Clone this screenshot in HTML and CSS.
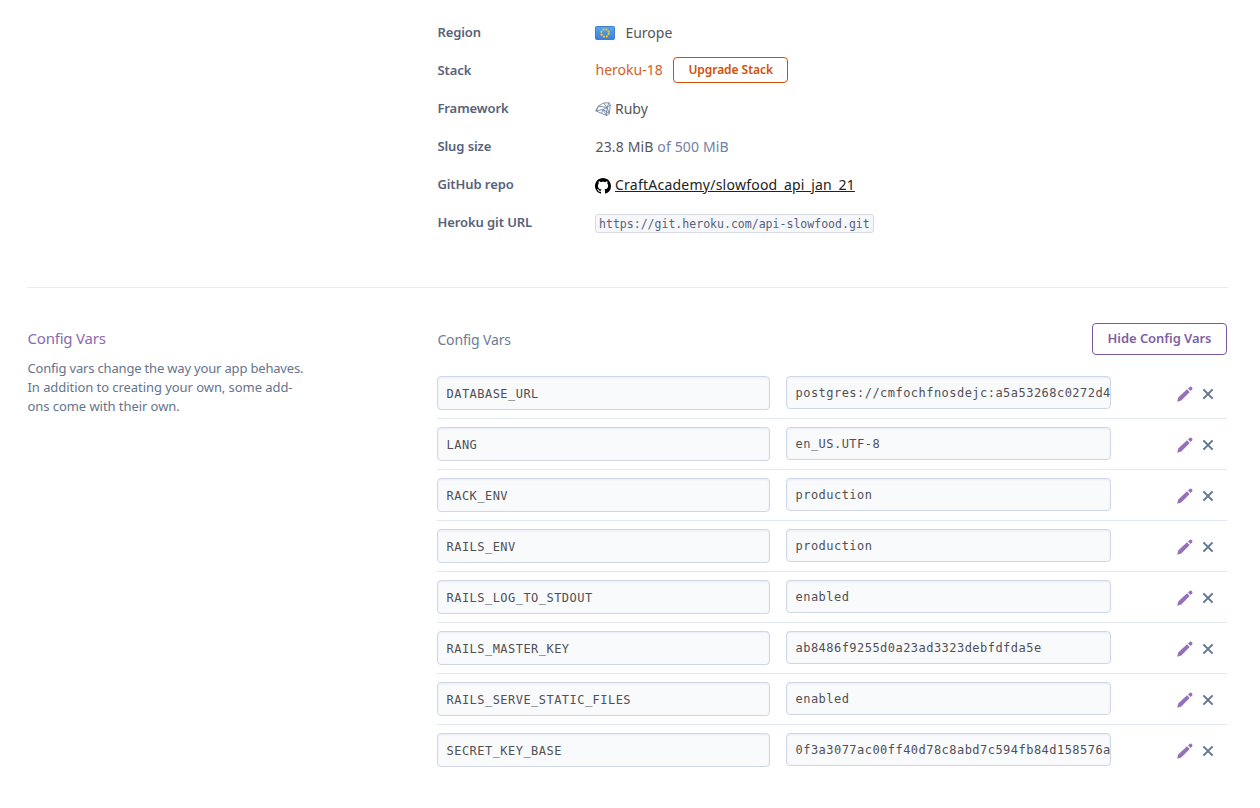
FILE: index.html
```
<!DOCTYPE html>
<html lang="en">
<head>
<meta charset="utf-8">
<title>App settings</title>
<link rel="stylesheet" href="styles.css">
</head>
<body>
<svg class="defs" width="0" height="0" aria-hidden="true">
  <symbol id="pencil" viewBox="0 0 16 16"><path d="M.2 15.800 1.200 11.600 10 3.300 12.700 6 4.300 14.600ZM11 2.400 12.600 .9Q13.600 0 14.600 .9L15.100 1.400Q16 2.400 15.100 3.400L13.600 5Z"/></symbol>
  <symbol id="cross" viewBox="0 0 12 12"><path d="M1.400 1.400 10.600 10.600M10.600 1.400 1.400 10.600"/></symbol>
</svg>
<main class="page">
  <section class="info">
    <dl class="details">
      <div class="detail"><dt>Region</dt><dd>
        <svg class="flag" viewBox="0 0 20 14"><defs><linearGradient id="sky" x1="0" y1="0" x2="0" y2="1"><stop offset="0" stop-color="#5aa5ee"/><stop offset="1" stop-color="#3c7fdc"/></linearGradient></defs><rect x=".5" y=".5" width="19" height="13" rx="1" fill="url(#sky)" stroke="#3f7fcc"/><circle cx="10" cy="7" r="3.800" fill="none" stroke="#f0cc22" stroke-width="1.900" stroke-dasharray="1.900 1.084"/></svg>
        <span>Europe</span></dd></div>
      <div class="detail"><dt>Stack</dt><dd class="stack-cell"><span class="stack">heroku-18</span><button class="upgrade">Upgrade Stack</button></dd></div>
      <div class="detail"><dt>Framework</dt><dd>
        <svg class="ruby" viewBox="0 0 16 16"><path d="M.7 9.800 3.500 5 8.500 2 14 1.800 15.300 4 14.300 12.500 11.500 14.500ZM.7 9.800 8 8.500 11.500 14.500 12 6.500 15.300 4M3.500 5 12 6.500 8 8.500M8.500 2 12 6.500 14 1.800M3.500 5 1.500 9.500M12 6.500 14.300 12.500 8 8.500 6.500 12"/></svg>
        <span>Ruby</span></dd></div>
      <div class="detail"><dt>Slug size</dt><dd><span class="slug">23.8 MiB <span class="muted">of 500 MiB</span></span></dd></div>
      <div class="detail"><dt>GitHub repo</dt><dd>
        <svg class="github" viewBox="0 0 16 16"><path d="M8 0C3.580 0 0 3.580 0 8c0 3.540 2.290 6.530 5.470 7.590.4.070.55-.17.55-.38 0-.19-.01-.82-.01-1.490-2.010.37-2.530-.49-2.690-.94-.09-.23-.48-.94-.82-1.130-.28-.15-.68-.52-.01-.53.63-.01 1.080.58 1.230.82.72 1.210 1.870.87 2.330.66.07-.52.28-.87.51-1.070-1.780-.2-3.640-.89-3.640-3.950 0-.87.31-1.590.82-2.150-.08-.2-.36-1.020.08-2.120 0 0 .67-.21 2.200.82.64-.18 1.320-.27 2-.27s1.360.09 2 .27c1.530-1.040 2.200-.82 2.200-.82.44 1.100.16 1.920.08 2.120.51.56.82 1.270.82 2.150 0 3.070-1.870 3.750-3.650 3.950.29.25.54.73.54 1.480 0 1.070-.01 1.930-.01 2.200 0 .21.15.46.55.38A8.010 8.010 0 0 0 16 8c0-4.420-3.580-8-8-8z"/></svg>
        <a class="repo">CraftAcademy/slowfood_api_jan_21</a></dd></div>
      <div class="detail"><dt>Heroku git URL</dt><dd><code class="giturl">https://git.heroku.com/api-slowfood.git</code></dd></div>
    </dl>
  </section>
  <section class="config">
    <aside class="about">
      <h2>Config Vars</h2>
      <p><span class="tight">Config vars change the way your app behaves.</span><br>In addition to creating your own, some add-<br>ons come with their own.</p>
    </aside>
    <div class="vars">
      <header class="vars-head"><h3>Config Vars</h3><button class="hide">Hide Config Vars</button></header>
      <ul class="list">
        <li class="row"><div class="key">DATABASE_URL</div><div class="value">postgres://cmfochfnosdejc:a5a53268c0272d4</div><div class="actions"><svg class="edit"><use href="#pencil"/></svg><svg class="remove"><use href="#cross"/></svg></div></li>
        <li class="row"><div class="key">LANG</div><div class="value">en_US.UTF-8</div><div class="actions"><svg class="edit"><use href="#pencil"/></svg><svg class="remove"><use href="#cross"/></svg></div></li>
        <li class="row"><div class="key">RACK_ENV</div><div class="value">production</div><div class="actions"><svg class="edit"><use href="#pencil"/></svg><svg class="remove"><use href="#cross"/></svg></div></li>
        <li class="row"><div class="key">RAILS_ENV</div><div class="value">production</div><div class="actions"><svg class="edit"><use href="#pencil"/></svg><svg class="remove"><use href="#cross"/></svg></div></li>
        <li class="row"><div class="key">RAILS_LOG_TO_STDOUT</div><div class="value">enabled</div><div class="actions"><svg class="edit"><use href="#pencil"/></svg><svg class="remove"><use href="#cross"/></svg></div></li>
        <li class="row"><div class="key">RAILS_MASTER_KEY</div><div class="value">ab8486f9255d0a23ad3323debfdfda5e</div><div class="actions"><svg class="edit"><use href="#pencil"/></svg><svg class="remove"><use href="#cross"/></svg></div></li>
        <li class="row"><div class="key">RAILS_SERVE_STATIC_FILES</div><div class="value">enabled</div><div class="actions"><svg class="edit"><use href="#pencil"/></svg><svg class="remove"><use href="#cross"/></svg></div></li>
        <li class="row"><div class="key">SECRET_KEY_BASE</div><div class="value">0f3a3077ac00ff40d78c8abd7c594fb84d158576a</div><div class="actions"><svg class="edit"><use href="#pencil"/></svg><svg class="remove"><use href="#cross"/></svg></div></li>
      </ul>
    </div>
  </section>
</main>
</body>
</html>
```

FILE: styles.css
```
* { box-sizing: border-box; }
body { margin: 0; background: #fff; color: #55555a; font-family: "Noto Sans", "Open Sans", sans-serif; overflow: hidden; }
.defs { display: block; height: 0; }
h2, h3, p, dl, dd, ul { margin: 0; padding: 0; }
.page { padding: 14px 32px 0 27px; height: 808px; }
.info { height: 274px; padding-left: 410px; border-bottom: 1px solid #ebebeb; }
.detail { display: flex; align-items: center; height: 38px; }
dt { width: 158px; font-size: 13px; font-weight: 600; color: #56627a; line-height: 18px; padding: 0 0 2px .4px; letter-spacing: -.08px; }
dd { display: flex; align-items: center; font-size: 14px; line-height: 20px; white-space: nowrap; }
.flag { width: 20px; height: 14px; margin-right: 10.400px; }
.stack-cell { padding-bottom: 2px; }
.stack { color: #d4601f; padding-left: .5px; }
.upgrade { width: 115px; height: 26px; margin: 0 0 0 10.500px; padding: 0 0 2px; border: 1px solid #cf4f0b; border-radius: 4px; background: #fff; color: #cf4f0b; font: 600 12px "Noto Sans", sans-serif; letter-spacing: -.05px; white-space: nowrap; }
.ruby { width: 16px; height: 16px; margin-right: 4px; fill: none; stroke: #7485a5; stroke-width: .9; stroke-linejoin: round; }
.slug { letter-spacing: .15px; padding-left: .5px; }
.muted { color: #6f82a5; }
.github { width: 16px; height: 16px; margin-right: 4px; margin-top: 1px; }
.repo { color: #222; text-decoration: underline; letter-spacing: .24px; }
.giturl { height: 19px; padding: 0 3px; border: 1px solid #d9dbe3; border-radius: 3px; background: #f5f7fb; color: #56627a; font: 11.540px/18px "DejaVu Sans Mono", monospace; }
.config { display: flex; padding-top: 35px; }
.about { width: 410px; flex: none; padding: 4px 0 0 .5px; }
.about h2 { font-size: 15px; font-weight: 400; line-height: 23px; color: #8a69ae; letter-spacing: -.2px; }
.about p { margin-top: 9px; font-size: 13px; line-height: 19px; color: #66748b; letter-spacing: -.06px; white-space: nowrap; }
.tight { letter-spacing: -.18px; }
.vars { width: 790px; flex: none; }
.vars-head { display: flex; justify-content: space-between; height: 45px; }
.vars-head h3 { font-size: 14px; font-weight: 400; line-height: 20px; color: #6d7b93; padding: 7px 0 0 .4px; letter-spacing: -.15px; }
.hide { width: 135px; height: 32px; padding: 0 0 2px; border: 1px solid #79589f; border-radius: 4px; background: #fff; color: #805fa5; font: 600 13px "Noto Sans", sans-serif; letter-spacing: -.06px; white-space: nowrap; }
.list { list-style: none; }
.row { display: flex; height: 51px; padding-top: 8px; border-bottom: 1px solid #e3e7f1; }
.row:last-child { border-bottom: 0; }
.key, .value { border: 1px solid #cfd7e6; border-radius: 4px; background: #f9fafc; box-shadow: inset 0 1px 2px #e8ecf4; font-family: "DejaVu Sans Mono", monospace; font-size: 12px; letter-spacing: .465px; color: #505055; white-space: nowrap; overflow: hidden; }
.key { width: 333px; height: 34px; padding-left: 8.500px; line-height: 35px; }
.value { width: 325px; height: 33px; margin-left: 16px; padding-left: 8.500px; line-height: 33px; }
.actions { display: flex; align-items: center; height: 34px; margin-left: 66px; padding-top: 2px; gap: 9px; }
.edit { width: 16px; height: 16px; fill: #9471b8; }
.remove { width: 12px; height: 12px; fill: none; stroke: #61758f; stroke-width: 2; }
```
